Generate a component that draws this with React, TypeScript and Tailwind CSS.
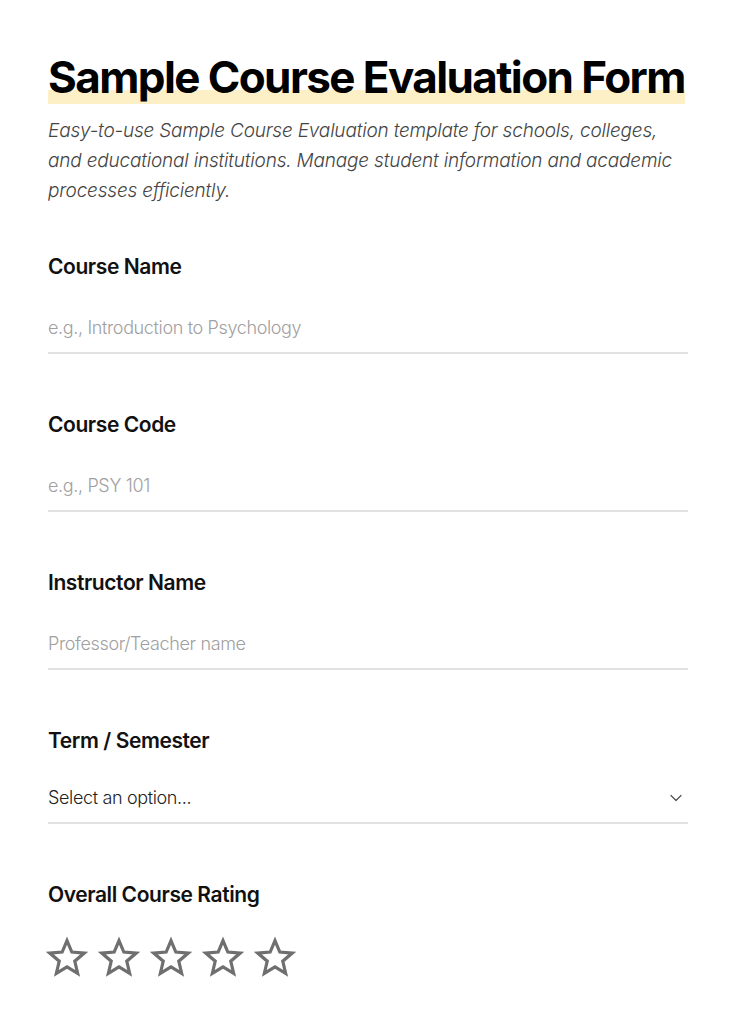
import { ChevronDown } from "lucide-react";

const fields = [
  { label: "Course Name", placeholder: "e.g., Introduction to Psychology" },
  { label: "Course Code", placeholder: "e.g., PSY 101" },
  { label: "Instructor Name", placeholder: "Professor/Teacher name" },
];

function Star() {
  return (
    <svg width="42" height="42" viewBox="0 0 24 24" fill="none" stroke="#6f6f6f" strokeWidth="1.8" strokeLinejoin="miter">
      <path d="M12 2.6l2.75 6.6 7.1.55-5.42 4.64 1.67 6.95L12 17.6l-6.1 3.74 1.67-6.95L2.15 9.75l7.1-.55L12 2.6z" />
    </svg>
  );
}

export default function App() {
  return (
    <div className="min-h-screen bg-white px-12 pt-[48px] pb-10 font-['Inter',sans-serif] text-[#111]">
      <h1 className="inline bg-[linear-gradient(transparent_74%,#fdf0c6_74%)] text-[44px] font-bold leading-[58px] tracking-[-0.036em] text-black">
        Sample Course Evaluation Form
      </h1>
      <p className="mt-[10px] text-[19px] font-light italic leading-[30px] tracking-[-0.01em] text-[#444]">
        Easy-to-use Sample Course Evaluation template for schools, colleges, and educational institutions. Manage student information and academic processes efficiently.
      </p>

      <div className="mt-[47px] flex flex-col gap-[57px]">
        {fields.map((f) => (
          <div key={f.label}>
            <label className="block text-[21px] font-semibold leading-7 tracking-[-0.02em]">{f.label}</label>
            <input
              placeholder={f.placeholder}
              className="mt-[27px] block w-full border-b-2 border-[#e2e2e2] pb-[12px] pt-[8px] text-[18px] font-light leading-6 tracking-[-0.02em] outline-none placeholder:text-[#a0a0a0]"
            />
          </div>
        ))}
        <div>
          <label className="block text-[21px] font-semibold leading-7 tracking-[-0.02em]">Term / Semester</label>
          <div className="mt-[25px] flex items-center justify-between border-b-2 border-[#e2e2e2] pb-[12px] pt-[6px]">
            <span className="text-[18px] font-light leading-6 tracking-[-0.02em] text-[#222]">Select an option...</span>
            <ChevronDown className="mr-[2px] h-5 w-5 text-[#555]" strokeWidth={1.5} />
          </div>
        </div>
        <div>
          <label className="block text-[21px] font-semibold leading-7 tracking-[-0.02em]">Overall Course Rating</label>
          <div className="mt-[27px] ml-[-2px] flex gap-[10px]">
            {[0, 1, 2, 3, 4].map((i) => (
              <Star key={i} />
            ))}
          </div>
        </div>
      </div>
    </div>
  );
}
